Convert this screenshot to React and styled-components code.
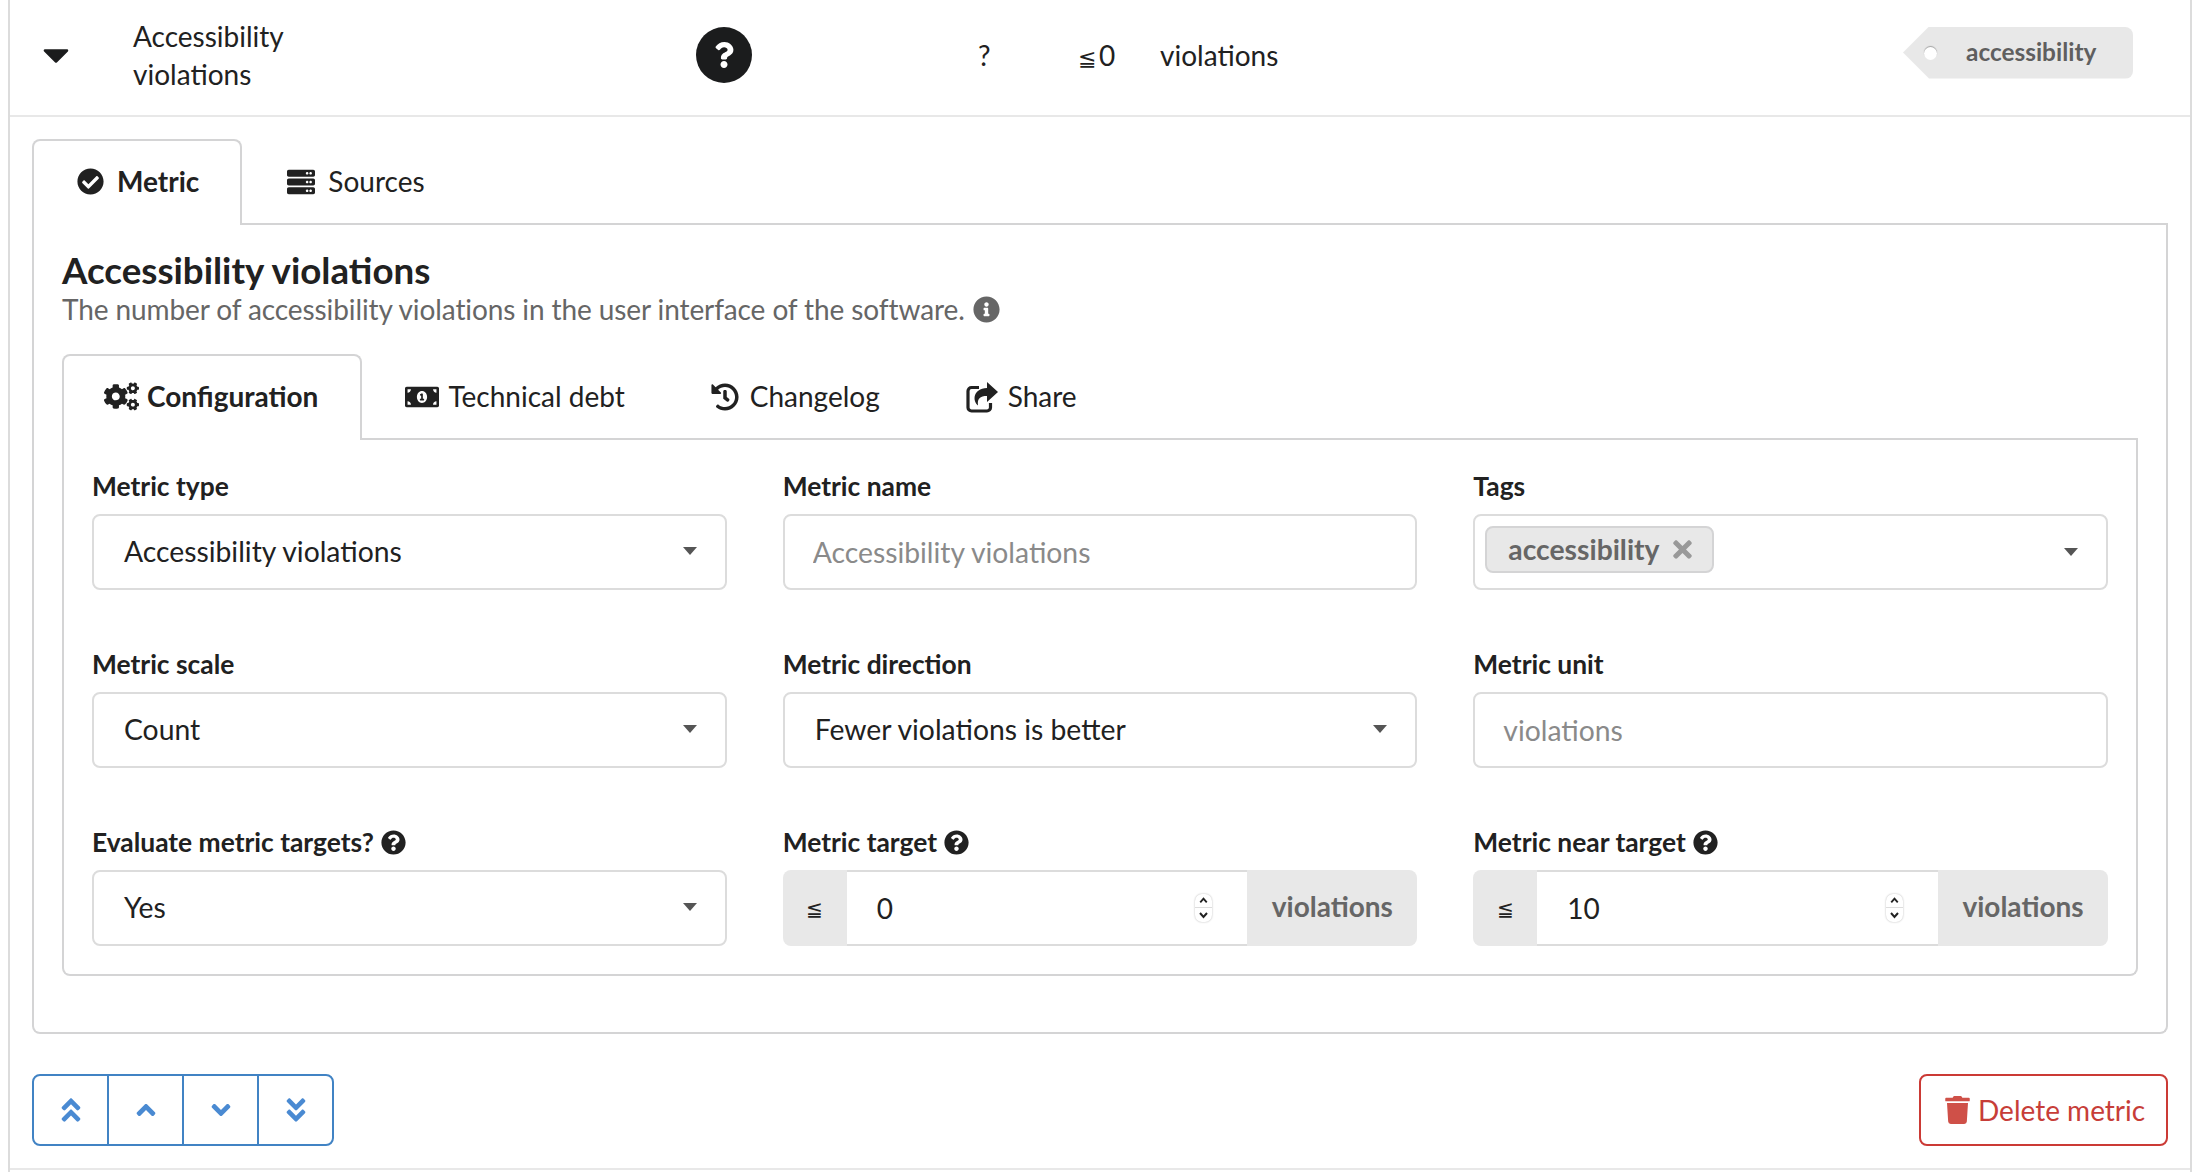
import React from 'react'
import styled, { createGlobalStyle } from 'styled-components'
import {
	FaAngleDoubleDown,
	FaAngleDoubleUp,
	FaAngleDown,
	FaAngleUp,
	FaCheckCircle,
	FaCogs,
	FaHistory,
	FaInfoCircle,
	FaMoneyBillAlt,
	FaQuestion,
	FaQuestionCircle,
	FaServer,
	FaTimes,
	FaTrash,
} from 'react-icons/fa'

const GlobalStyle = createGlobalStyle`
	html, body {
		margin: 0;
		background: #fff;
	}
	body {
		font-family: Lato, "Noto Sans", "Liberation Sans", sans-serif;
		font-size: 28px;
		line-height: 39px;
		color: #212121;
	}
	* {
		box-sizing: border-box;
	}
`

const Page = styled.div`
	width: 2192px;
	height: 1172px;
	padding-left: 8px;
	overflow: hidden;
`

const Card = styled.div`
	height: 1172px;
	border-left: 2px solid #dcdcdc;
	border-right: 2px solid #dcdcdc;
`

const SummaryRow = styled.div`
	display: grid;
	grid-template-columns: 123px 563px 282px 100px 82px 1fr auto;
	align-items: center;
	height: 117px;
	padding: 0 57px 6px 0;
	border-bottom: 2px solid #e8e8e8;
`

const Expander = styled.svg`
	width: 26px;
	height: 14px;
	margin: 2px 0 0 33px;
`

const MetricName = styled.div`
	width: 180px;
	line-height: 38px;
`

const StatusBadge = styled.div`
	display: flex;
	align-items: center;
	justify-content: center;
	width: 56px;
	height: 56px;
	color: #fff;
	background: #1b1c1d;
	border-radius: 50%;
	svg {
		width: 26px;
		height: 26px;
	}
`

const Cell = styled.div`
	padding-top: 2px;
`

const LessEqual = styled.span`
	font-size: 22px;
	line-height: 1;
	margin-right: 3px;
`

const Tag = styled.div`
	position: relative;
	display: flex;
	align-items: center;
	height: 52px;
	width: 230px;
	margin-bottom: 4px;
	padding: 0 0 2px 63px;
	font-size: 24.4px;
	font-weight: 700;
	color: #5f5f5f;
	background: #e8e8e8;
	border-radius: 8px;
	clip-path: polygon(0 50%, 26px 0, 100% 0, 100% 100%, 26px 100%);
	&::after {
		content: '';
		position: absolute;
		left: 21px;
		top: 20px;
		width: 13px;
		height: 13px;
		border-radius: 50%;
		background: #fff;
		box-shadow: 0 -1px 1px rgba(0, 0, 0, 0.3);
	}
`

const Detail = styled.div`
	height: 1053px;
	padding: 22px 22px 0;
	border-bottom: 2px solid #e8e8e8;
`

const TabBar = styled.div`
	display: flex;
	border-bottom: 2px solid #d4d4d5;
`

const Tab = styled.div`
	display: flex;
	align-items: center;
	gap: ${(p) => p.$gap || 13}px;
	height: ${(p) => (p.$active ? p.$height + 2 : p.$height)}px;
	margin-bottom: ${(p) => (p.$active ? -2 : 0)}px;
	padding: 0 ${(p) => p.$right ?? p.$padding}px ${(p) => (p.$active ? 3 : 1)}px ${(p) => p.$padding}px;
	font-weight: ${(p) => (p.$active ? 700 : 400)};
	background: #fff;
	border: 2px solid ${(p) => (p.$active ? '#d4d4d5' : 'transparent')};
	border-bottom: none;
	border-radius: 8px 8px 0 0;
	svg {
		display: block;
		flex: none;
	}
`

const Segment = styled.div`
	border: 2px solid #d4d4d5;
	border-top: none;
	border-radius: 0 0 8px 8px;
`

const MetricPanel = styled(Segment)`
	padding: 25px 28px 56px;
`

const ConfigPanel = styled(Segment)`
	padding: 28px;
`

const Heading = styled.h3`
	margin: 0 0 1px;
	font-size: 36.7px;
	line-height: 40px;
	font-weight: 700;
`

const SubHeading = styled.div`
	display: flex;
	align-items: center;
	gap: 8px;
	height: 36px;
	margin-bottom: 27px;
	letter-spacing: -0.1px;
	color: #666;
`

const InfoIcon = styled(FaInfoCircle)`
	width: 27px;
	height: 27px;
	color: #666;
`

const FormGrid = styled.div`
	display: grid;
	grid-template-columns: repeat(3, minmax(0, 1fr));
	column-gap: 56px;
	row-gap: 56px;
`

const Field = styled.div`
	display: flex;
	flex-direction: column;
	min-width: 0;
`

const Label = styled.label`
	display: flex;
	align-items: center;
	gap: 7px;
	height: 36px;
	margin-bottom: 10px;
	font-size: 26.4px;
	font-weight: 700;
	svg {
		width: 25px;
		height: 25px;
	}
`

const Control = styled.div`
	display: flex;
	align-items: center;
	height: 76px;
	font-size: 28.3px;
	background: #fff;
	border: 2px solid #dcdcdc;
	border-radius: 8px;
`

const SelectBox = styled(Control)`
	justify-content: space-between;
	padding: 0 28px 2px 30px;
`

const TagSelect = styled(SelectBox)`
	padding: 0 28px 0 10px;
`

const SelectCaret = styled.svg`
	width: 14px;
	height: 8px;
	fill: #555;
`

const TextInput = styled.input`
	width: 100%;
	height: 76px;
	padding: 0 28px;
	font: inherit;
	font-size: 28.3px;
	color: #212121;
	border: 2px solid #dcdcdc;
	border-radius: 8px;
	outline: none;
	&::placeholder {
		color: #8a8a8a;
		opacity: 1;
	}
`

const Chip = styled.div`
	display: flex;
	align-items: center;
	gap: 13px;
	height: 47px;
	margin-bottom: 5px;
	padding: 0 20px 0 21px;
	font-weight: 700;
	color: #666;
	background: #e8e8e8;
	border: 2px solid #d4d4d5;
	border-radius: 8px;
	svg {
		width: 19px;
		height: 27px;
		color: #999;
	}
`

const InputGroup = styled.div`
	display: grid;
	grid-template-columns: 64px minmax(0, 1fr) 170px;
	height: 76px;
`

const Addon = styled.div`
	display: flex;
	align-items: center;
	justify-content: center;
	padding-bottom: ${(p) => (p.$unit ? 4 : 0)}px;
	font-weight: ${(p) => (p.$unit ? 700 : 400)};
	font-size: ${(p) => (p.$unit ? 28 : 20)}px;
	color: ${(p) => (p.$unit ? '#666' : '#212121')};
	background: #e8e8e8;
	border-radius: ${(p) => (p.$unit ? '0 8px 8px 0' : '8px 0 0 8px')};
`

const NumberBox = styled.div`
	display: flex;
	align-items: center;
	min-width: 0;
	padding-right: 35px;
	border-top: 2px solid #dcdcdc;
	border-bottom: 2px solid #dcdcdc;
`

const NumberInput = styled.input`
	flex: 1;
	width: 100%;
	min-width: 0;
	height: 100%;
	padding: 0 0 0 30px;
	font: inherit;
	color: #212121;
	border: none;
	outline: none;
`

const Spinner = styled.div`
	display: flex;
	flex: none;
	flex-direction: column;
	width: 17px;
	height: 28px;
	border-radius: 7px;
	box-shadow: 0 0 2px rgba(0, 0, 0, 0.3);
	svg {
		width: 17px;
		height: 14px;
		fill: none;
		stroke: #222;
		stroke-width: 2;
	}
	svg:first-child {
		border-bottom: 1px solid #ddd;
	}
`

const Actions = styled.div`
	display: flex;
	justify-content: space-between;
	margin-top: 40px;
`

const ButtonGroup = styled.div`
	display: flex;
	height: 72px;
	border: 2px solid #4183c4;
	border-radius: 8px;
`

const MoveButton = styled.button`
	display: flex;
	align-items: center;
	justify-content: center;
	width: 75px;
	padding: 0;
	color: #4a8ad2;
	background: none;
	border: none;
	border-left: 2px solid #4183c4;
	&:first-child {
		width: 73px;
		border-left: none;
	}
	svg {
		width: 26px;
		height: 30px;
	}
`

const DeleteButton = styled.button`
	display: flex;
	align-items: center;
	gap: 8px;
	width: 249px;
	height: 72px;
	padding: 0 0 0 24px;
	font: inherit;
	color: #c73d38;
	background: #fff;
	border: 2px solid #cb3a35;
	border-radius: 8px;
	svg {
		width: 25px;
		height: 28px;
		color: #cf5048;
	}
`

function Caret() {
	return (
		<SelectCaret viewBox="0 0 14 8">
			<path d="M0 0h14L7 8z" />
		</SelectCaret>
	)
}

function ShareIcon() {
	return (
		<svg width="32" height="32" viewBox="0 0 32 32" fill="#212121">
			<path d="M13 6.500H5.500a3.500 3.500 0 0 0-3.500 3.500v16.500a3.500 3.500 0 0 0 3.500 3.500H21a3.500 3.500 0 0 0 3.500-3.500V22" fill="none" stroke="#212121" strokeWidth="3.200" />
			<path d="M21 1l11 10-11 10v-6c-7 0-10 2.500-9 9.500C6.500 20 6.500 8 21 7z" />
		</svg>
	)
}

function Select({ value }) {
	return (
		<SelectBox>
			<span>{value}</span>
			<Caret />
		</SelectBox>
	)
}

function TargetInput({ value }) {
	return (
		<InputGroup>
			<Addon>≦</Addon>
			<NumberBox>
				<NumberInput readOnly value={value} />
				<Spinner>
					<svg viewBox="0 0 17 14">
						<path d="M5 9l3.500-4 3.500 4" />
					</svg>
					<svg viewBox="0 0 17 14">
						<path d="M5 5l3.500 4 3.500-4" />
					</svg>
				</Spinner>
			</NumberBox>
			<Addon $unit>violations</Addon>
		</InputGroup>
	)
}

export default function App() {
	return (
		<Page>
			<GlobalStyle />
			<Card>
				<SummaryRow>
					<Expander viewBox="0 0 26 14">
						<path d="M2 1.500h22L13 12.500z" fill="#1b1c1d" stroke="#1b1c1d" strokeWidth="2.500" strokeLinejoin="round" />
					</Expander>
					<MetricName>Accessibility violations</MetricName>
					<StatusBadge>
						<FaQuestion />
					</StatusBadge>
					<Cell>?</Cell>
					<Cell>
						<LessEqual>≦</LessEqual>0
					</Cell>
					<Cell>violations</Cell>
					<Tag>accessibility</Tag>
				</SummaryRow>
				<Detail>
					<TabBar>
						<Tab $active $height={84} $padding={43} $right={41}>
							<FaCheckCircle size={27} />
							Metric
						</Tab>
						<Tab $height={84} $padding={43}>
							<FaServer size={28} />
							Sources
						</Tab>
					</TabBar>
					<MetricPanel>
						<Heading>Accessibility violations</Heading>
						<SubHeading>
							The number of accessibility violations in the user interface of the software.
							<InfoIcon />
						</SubHeading>
						<TabBar>
							<Tab $active $height={84} $padding={40} $right={42} $gap={8}>
								<FaCogs size={35} />
								Configuration
							</Tab>
							<Tab $height={84} $padding={41} $gap={9}>
								<FaMoneyBillAlt size={34} />
								Technical debt
							</Tab>
							<Tab $height={84} $padding={41} $gap={11}>
								<FaHistory size={28} />
								Changelog
							</Tab>
							<Tab $height={84} $padding={41} $gap={10}>
								<ShareIcon />
								Share
							</Tab>
						</TabBar>
						<ConfigPanel>
							<FormGrid>
								<Field>
									<Label>Metric type</Label>
									<Select value="Accessibility violations" />
								</Field>
								<Field>
									<Label>Metric name</Label>
									<TextInput readOnly placeholder="Accessibility violations" />
								</Field>
								<Field>
									<Label>Tags</Label>
									<TagSelect>
										<Chip>
											accessibility
											<FaTimes />
										</Chip>
										<Caret />
									</TagSelect>
								</Field>
								<Field>
									<Label>Metric scale</Label>
									<Select value="Count" />
								</Field>
								<Field>
									<Label>Metric direction</Label>
									<Select value="Fewer violations is better" />
								</Field>
								<Field>
									<Label>Metric unit</Label>
									<TextInput readOnly placeholder="violations" />
								</Field>
								<Field>
									<Label>
										Evaluate metric targets?
										<FaQuestionCircle />
									</Label>
									<Select value="Yes" />
								</Field>
								<Field>
									<Label>
										Metric target
										<FaQuestionCircle />
									</Label>
									<TargetInput value="0" />
								</Field>
								<Field>
									<Label>
										Metric near target
										<FaQuestionCircle />
									</Label>
									<TargetInput value="10" />
								</Field>
							</FormGrid>
						</ConfigPanel>
					</MetricPanel>
					<Actions>
						<ButtonGroup>
							<MoveButton>
								<FaAngleDoubleUp />
							</MoveButton>
							<MoveButton>
								<FaAngleUp />
							</MoveButton>
							<MoveButton>
								<FaAngleDown />
							</MoveButton>
							<MoveButton>
								<FaAngleDoubleDown />
							</MoveButton>
						</ButtonGroup>
						<DeleteButton>
							<FaTrash />
							Delete metric
						</DeleteButton>
					</Actions>
				</Detail>
			</Card>
		</Page>
	)
}
